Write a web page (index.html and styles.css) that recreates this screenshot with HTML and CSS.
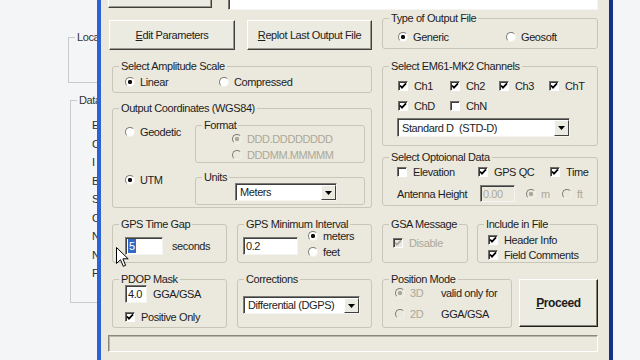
FILE: index.html
```html
<!DOCTYPE html>
<html lang="en">
<head>
    <meta charset="UTF-8">
    <meta name="viewport" content="width=device-width, initial-scale=1.0">
    <title>EM61-MK2 Output Options</title>
    <link rel="stylesheet" href="styles.css">
</head>
<body>
    <div class="backwin">
        <fieldset class="bgroup loc"><legend>Location</legend></fieldset>
        <fieldset class="bgroup dat">
            <legend>Data</legend>
            <div class="bline">Easting</div>
            <div class="bline">Channel</div>
            <div class="bline">I</div>
            <div class="bline">Base</div>
            <div class="bline">Station</div>
            <div class="bline">Coil</div>
            <div class="bline">Northing</div>
            <div class="bline">Number</div>
            <div class="bline">File</div>
        </fieldset>
    </div>

    <div class="dialog">
        <div class="toprow">
            <div class="btn topbtn"></div>
            <div class="edit topedit"></div>
        </div>

        <div class="cols">
            <div class="col col-left">
                <div class="btnrow">
                    <div class="btn edit-params"><span><u>E</u>dit Parameters</span></div>
                    <div class="btn replot"><span><u>R</u>eplot Last Output File</span></div>
                </div>

                <fieldset class="f-amp">
                    <legend>Select Amplitude Scale</legend>
                    <div class="row">
                        <label class="opt w94"><span class="radio on"></span>Linear</label>
                        <label class="opt"><span class="radio"></span>Compressed</label>
                    </div>
                </fieldset>

                <fieldset class="f-coords">
                    <legend>Output Coordinates (WGS84)</legend>
                    <div class="coords-grid">
                        <label class="opt geo"><span class="radio"></span>Geodetic</label>
                        <fieldset class="f-format">
                            <legend>Format</legend>
                            <label class="opt dis"><span class="radio off on"></span>DDD.DDDDDDDD</label>
                            <label class="opt dis gap3"><span class="radio off"></span>DDDMM.MMMMM</label>
                        </fieldset>
                        <label class="opt utm"><span class="radio on"></span>UTM</label>
                        <fieldset class="f-units">
                            <legend>Units</legend>
                            <div class="combo units-combo">
                                <span class="val">Meters</span>
                                <span class="arrow"><svg width="7" height="4" viewBox="0 0 7 4"><path d="M0 0H7L3.5 4Z"/></svg></span>
                            </div>
                        </fieldset>
                    </div>
                </fieldset>

                <div class="pair">
                    <fieldset class="f-gap">
                        <legend>GPS Time Gap</legend>
                        <div class="row">
                            <div class="edit gap-edit"><span class="sel">5</span></div>
                            <span class="unit">seconds</span>
                        </div>
                    </fieldset>
                    <fieldset class="f-int">
                        <legend>GPS Minimum Interval</legend>
                        <div class="row top">
                            <div class="edit int-edit">0.2</div>
                            <div class="radios">
                                <label class="opt"><span class="radio on"></span>meters</label>
                                <label class="opt gap3"><span class="radio"></span>feet</label>
                            </div>
                        </div>
                    </fieldset>
                </div>

                <div class="pair">
                    <fieldset class="f-pdop">
                        <legend>PDOP Mask</legend>
                        <div class="row pdop-row">
                            <div class="edit pdop-edit">4.0</div>
                            <span class="unit2">GGA/GSA</span>
                        </div>
                        <label class="opt cb pos-only"><span class="check"><svg class="tick" viewBox="0 0 8 8"><path d="M1 3.5L3 5.6L7 1.4"/></svg></span>Positive Only</label>
                    </fieldset>
                    <fieldset class="f-corr">
                        <legend>Corrections</legend>
                        <div class="combo corr-combo">
                            <span class="val">Differential (DGPS)</span>
                            <span class="arrow"><svg width="7" height="4" viewBox="0 0 7 4"><path d="M0 0H7L3.5 4Z"/></svg></span>
                        </div>
                    </fieldset>
                </div>
            </div>

            <div class="col col-right">
                <fieldset class="f-type">
                    <legend>Type of Output File</legend>
                    <div class="row">
                        <label class="opt w108"><span class="radio on"></span>Generic</label>
                        <label class="opt"><span class="radio"></span>Geosoft</label>
                    </div>
                </fieldset>

                <fieldset class="f-chan">
                    <legend>Select EM61-MK2 Channels</legend>
                    <div class="chan-grid">
                        <label class="opt cb"><span class="check"><svg class="tick" viewBox="0 0 8 8"><path d="M1 3.5L3 5.6L7 1.4"/></svg></span>Ch1</label>
                        <label class="opt cb"><span class="check"><svg class="tick" viewBox="0 0 8 8"><path d="M1 3.5L3 5.6L7 1.4"/></svg></span>Ch2</label>
                        <label class="opt cb"><span class="check"><svg class="tick" viewBox="0 0 8 8"><path d="M1 3.5L3 5.6L7 1.4"/></svg></span>Ch3</label>
                        <label class="opt cb"><span class="check"><svg class="tick" viewBox="0 0 8 8"><path d="M1 3.5L3 5.6L7 1.4"/></svg></span>ChT</label>
                        <label class="opt cb"><span class="check"><svg class="tick" viewBox="0 0 8 8"><path d="M1 3.5L3 5.6L7 1.4"/></svg></span>ChD</label>
                        <label class="opt cb"><span class="check"></span>ChN</label>
                    </div>
                    <div class="combo chan-combo">
                        <span class="val">Standard D&nbsp; (STD-D)</span>
                        <span class="arrow"><svg width="7" height="4" viewBox="0 0 7 4"><path d="M0 0H7L3.5 4Z"/></svg></span>
                    </div>
                </fieldset>

                <fieldset class="f-opt">
                    <legend>Select Optoional Data</legend>
                    <div class="opt-grid">
                        <label class="opt cb"><span class="check"></span>Elevation</label>
                        <label class="opt cb"><span class="check"><svg class="tick" viewBox="0 0 8 8"><path d="M1 3.5L3 5.6L7 1.4"/></svg></span>GPS QC</label>
                        <label class="opt cb"><span class="check"><svg class="tick" viewBox="0 0 8 8"><path d="M1 3.5L3 5.6L7 1.4"/></svg></span>Time</label>
                    </div>
                    <div class="row ant-row">
                        <span class="ant-label">Antenna Height</span>
                        <div class="edit off ant-edit">0.00</div>
                        <label class="opt dis unit-m"><span class="radio off on"></span>m</label>
                        <label class="opt dis"><span class="radio off"></span>ft</label>
                    </div>
                </fieldset>

                <div class="pair pair-r1">
                    <fieldset class="f-gsa">
                        <legend>GSA Message</legend>
                        <label class="opt cb dis"><span class="check off"><svg class="tick" viewBox="0 0 8 8"><path d="M1 3.5L3 5.6L7 1.4"/></svg></span>Disable</label>
                    </fieldset>
                    <fieldset class="f-inc">
                        <legend>Include in File</legend>
                        <label class="opt cb"><span class="check"><svg class="tick" viewBox="0 0 8 8"><path d="M1 3.5L3 5.6L7 1.4"/></svg></span>Header Info</label>
                        <label class="opt cb gap2"><span class="check"><svg class="tick" viewBox="0 0 8 8"><path d="M1 3.5L3 5.6L7 1.4"/></svg></span>Field Comments</label>
                    </fieldset>
                </div>

                <div class="pair pair-r2">
                    <fieldset class="f-pos">
                        <legend>Position Mode</legend>
                        <div class="pos-grid">
                            <label class="opt dis"><span class="radio off on"></span>3D</label>
                            <span>valid only for</span>
                            <label class="opt dis"><span class="radio off"></span>2D</label>
                            <span>GGA/GSA</span>
                        </div>
                    </fieldset>
                    <div class="btn proceed"><span><u>P</u>roceed</span></div>
                </div>
            </div>
        </div>

        <div class="status"></div>
    </div>

    <svg class="cursor" width="13" height="21" viewBox="0 0 13 21">
        <path d="M0.5 0.5V16.5L4.5 12.7L7.3 19.3L9.6 18.3L6.9 11.8H12.2Z" fill="#fff" stroke="#000" stroke-width="1" stroke-linejoin="round"/>
    </svg>
</body>
</html>
```

FILE: styles.css
```css
body {
    margin: 0;
    height: 360px;
    overflow: hidden;
    position: relative;
    background-color: #f4f5f6;
    font-family: "Liberation Sans", Arial, sans-serif;
    font-size: 11px;
    letter-spacing: -0.4px;
    color: #1d1d1d;
}

/* group boxes: --pl is the content indent, the legend stays put */
fieldset {
    margin: 0;
    padding: 0 0 0 var(--pl, 0px);
    border: 1px solid #c8c6b9;
    border-radius: 3px;
    box-sizing: border-box;
    min-width: 0;
}
legend {
    margin-left: calc(6px - var(--pl, 0px));
    padding: 0 2px;
    line-height: 13px;
    white-space: nowrap;
}

/* window behind the dialog */
.backwin {
    position: absolute;
    left: 68px;
    top: 31px;
    width: 90px;
}
.bgroup {
    border-color: #cacaca;
    border-radius: 0;
}
.bgroup legend {
    color: #333;
}
.loc {
    height: 52px;
}
.dat {
    height: 209px;
    margin: 11px 0 0 2px;
    padding-top: 9px;
    --pl: 21px;
}
.bline {
    line-height: 18.5px;
    color: #2a2a2a;
}

/* dialog */
.dialog {
    position: absolute;
    left: 97px;
    top: -20px;
    width: 486px;
    height: 390px;
    padding: 0 11px;
    background-color: #ebe9dd;
    border-left: 4px solid #2d62d6;
    border-right: 4px solid #12318f;
}

.toprow {
    display: flex;
    height: 28px;
}
.topbtn {
    width: 104px;
    height: 28px;
    margin-left: -4px;
}
.topedit {
    width: 372px;
    height: 30px !important;
    margin-left: 16px;
}

.btn {
    display: flex;
    align-items: center;
    justify-content: center;
    box-sizing: border-box;
    background-color: #ecebe1;
    border: 1px solid;
    border-color: #fff #3f3f3f #3f3f3f #fff;
    box-shadow: inset -1px -1px 0 #9d9a8c;
    white-space: nowrap;
}

.cols {
    display: flex;
    gap: 10px;
    margin-top: 4px;
}
.col {
    display: flex;
    flex-direction: column;
}
.col-left {
    width: 260px;
}
.col-right {
    width: 216px;
}

.btnrow {
    display: flex;
    gap: 12px;
    margin: 8px 0 0 -3px;
}
.edit-params {
    width: 126px;
    height: 30px;
}
.replot {
    width: 125px;
    height: 30px;
}

.row {
    display: flex;
    align-items: center;
}
.row.top {
    align-items: flex-start;
}

.opt {
    display: flex;
    align-items: center;
    gap: 5px;
    height: 13px;
    white-space: nowrap;
}
.opt.cb {
    gap: 6px;
}
.dis {
    color: #aca899;
}
.gap3 {
    margin-top: 3px;
}
.gap2 {
    margin-top: 2px;
}
.w94 {
    width: 94px;
}
.w108 {
    width: 108px;
}

.radio {
    flex: none;
    width: 10px;
    height: 10px;
    box-sizing: border-box;
    border-radius: 50%;
    border: 1px solid;
    border-color: #7d7c75 #f2f1ec #f2f1ec #7d7c75;
    background: #fff;
}
.radio.on {
    background: radial-gradient(circle, #111 0 1.8px, #fff 2.5px);
}
.radio.off {
    background: #ebe9dd;
}
.radio.off.on {
    background: radial-gradient(circle, #aca899 0 1.8px, #ebe9dd 2.5px);
}

.check {
    flex: none;
    display: flex;
    align-items: center;
    justify-content: center;
    width: 10px;
    height: 10px;
    box-sizing: border-box;
    border: 1px solid;
    border-color: #6f6e68 #fff #fff #6f6e68;
    box-shadow: inset 1px 1px 0 #3c3c3c;
    background: #fff;
}
.check.off {
    background: #ebe9dd;
}
.tick {
    width: 8px;
    height: 8px;
}
.tick path {
    fill: none;
    stroke: #000;
    stroke-width: 1.8;
}
.check.off .tick path {
    stroke: #aca899;
}

.edit {
    box-sizing: border-box;
    height: 18px;
    background: #fff;
    border: 1px solid;
    border-color: #7a7a74 #f4f4f0 #f4f4f0 #7a7a74;
    box-shadow: inset 1px 1px 0 #3f3f3f;
    padding-left: 2px;
    line-height: 16px;
}
.edit.off {
    background: #ebe9dd;
    color: #aca899;
}
.sel {
    display: inline-block;
    background: #316ac5;
    color: #fff;
    line-height: 14px;
    padding: 0 1px;
    margin-top: 1px;
    vertical-align: top;
}

.combo {
    display: flex;
    box-sizing: border-box;
    background: #fff;
    border: 1px solid;
    border-color: #7a7a74 #f4f4f0 #f4f4f0 #7a7a74;
    box-shadow: inset 1px 1px 0 #3f3f3f;
}
.combo .val {
    flex: 1;
    padding: 0 0 0 4px;
    display: flex;
    align-items: center;
    white-space: nowrap;
}
.combo .arrow {
    width: 15px;
    margin: 1px 0 0 0;
    box-sizing: border-box;
    display: flex;
    align-items: center;
    justify-content: center;
    background: #ecebe1;
    border: 1px solid;
    border-color: #fff #404040 #404040 #fff;
}
.combo .arrow path {
    fill: #000;
}

/* left column groups */
.f-amp {
    height: 33px;
    margin-top: 10px;
    padding-top: 2px;
    --pl: 12px;
}
.f-coords {
    height: 106px;
    margin-top: 9px;
    padding-top: 4px;
    --pl: 12px;
}
.coords-grid {
    display: grid;
    grid-template-columns: 70px 170px;
    row-gap: 8px;
}
.geo {
    margin-top: 6.5px;
}
.utm {
    margin-top: 2.5px;
}
.f-format {
    height: 44px;
    padding-top: 0.5px;
    --pl: 36px;
}
.f-units {
    height: 34px;
    --pl: 39px;
}
.units-combo {
    width: 102px;
    height: 18px;
    margin-top: -1px;
}

.pair {
    display: flex;
    gap: 10px;
    margin-top: 10px;
    align-items: flex-start;
}
.f-gap {
    width: 115px;
    height: 45px;
    padding-top: 6px;
    --pl: 12px;
}
.gap-edit {
    width: 38px;
}
.unit {
    margin-left: 9px;
}
.f-int {
    width: 135px;
    height: 45px;
    padding-top: 6px;
    --pl: 5px;
}
.int-edit {
    width: 55px;
}
.radios {
    margin: -8px 0 0 10px;
}
.f-pdop {
    width: 115px;
    height: 55px;
    --pl: 12px;
}
.pdop-row {
    margin-top: -1px;
}
.pdop-edit {
    width: 22px;
}
.unit2 {
    margin-left: 6px;
}
.pos-only {
    margin-top: 7.5px;
}
.f-corr {
    width: 135px;
    height: 55px;
    padding-top: 10px;
    --pl: 5px;
}
.corr-combo {
    width: 117px;
    height: 18px;
}

/* right column groups */
.f-type {
    height: 37px;
    padding-top: 5px;
    --pl: 15px;
}
.f-chan {
    height: 86px;
    margin-top: 11px;
    padding-top: 6px;
    --pl: 15px;
}
.chan-grid {
    display: grid;
    grid-template-columns: 52px 49px 50px auto;
    row-gap: 7px;
}
.chan-combo {
    width: 173px;
    height: 19px;
    margin: 6px 0 0 -1px;
}
.f-opt {
    height: 55px;
    margin-top: 5px;
    padding-top: 1px;
    --pl: 14px;
}
.opt-grid {
    display: grid;
    grid-template-columns: 81px 72px auto;
}
.ant-row {
    margin-top: 7px;
}
.ant-label {
    width: 83px;
    white-space: nowrap;
}
.ant-edit {
    width: 35px;
    height: 17px;
}
.unit-m {
    width: 36px;
    margin-left: 11px;
}

.pair-r1 {
    margin-top: 12px;
    gap: 9px;
}
.f-gsa {
    width: 86px;
    height: 45px;
    padding-top: 5.5px;
    --pl: 10px;
}
.f-inc {
    width: 121px;
    height: 45px;
    padding-top: 2px;
    --pl: 10px;
}
.pair-r2 {
    gap: 7px;
}
.f-pos {
    width: 130px;
    height: 55px;
    padding-top: 0.5px;
    --pl: 12px;
}
.pos-grid {
    display: grid;
    grid-template-columns: 46px auto;
    row-gap: 8px;
    line-height: 13px;
}
.proceed {
    width: 79px;
    height: 48px;
    margin-top: 6px;
    font-size: 12px;
    font-weight: bold;
    border-color: #fff #1e1e1e #1e1e1e #fff;
    box-shadow: inset -1px -1px 0 #858276;
}

.status {
    margin: 7px 0 0 -4px;
    width: 490px;
    height: 17px;
    box-sizing: border-box;
    border: 1px solid;
    border-color: #8a887c #fff #fff #8a887c;
    box-shadow: inset 1px 1px 0 #b9b7aa;
}

.cursor {
    position: absolute;
    left: 116px;
    top: 247px;
}
```
